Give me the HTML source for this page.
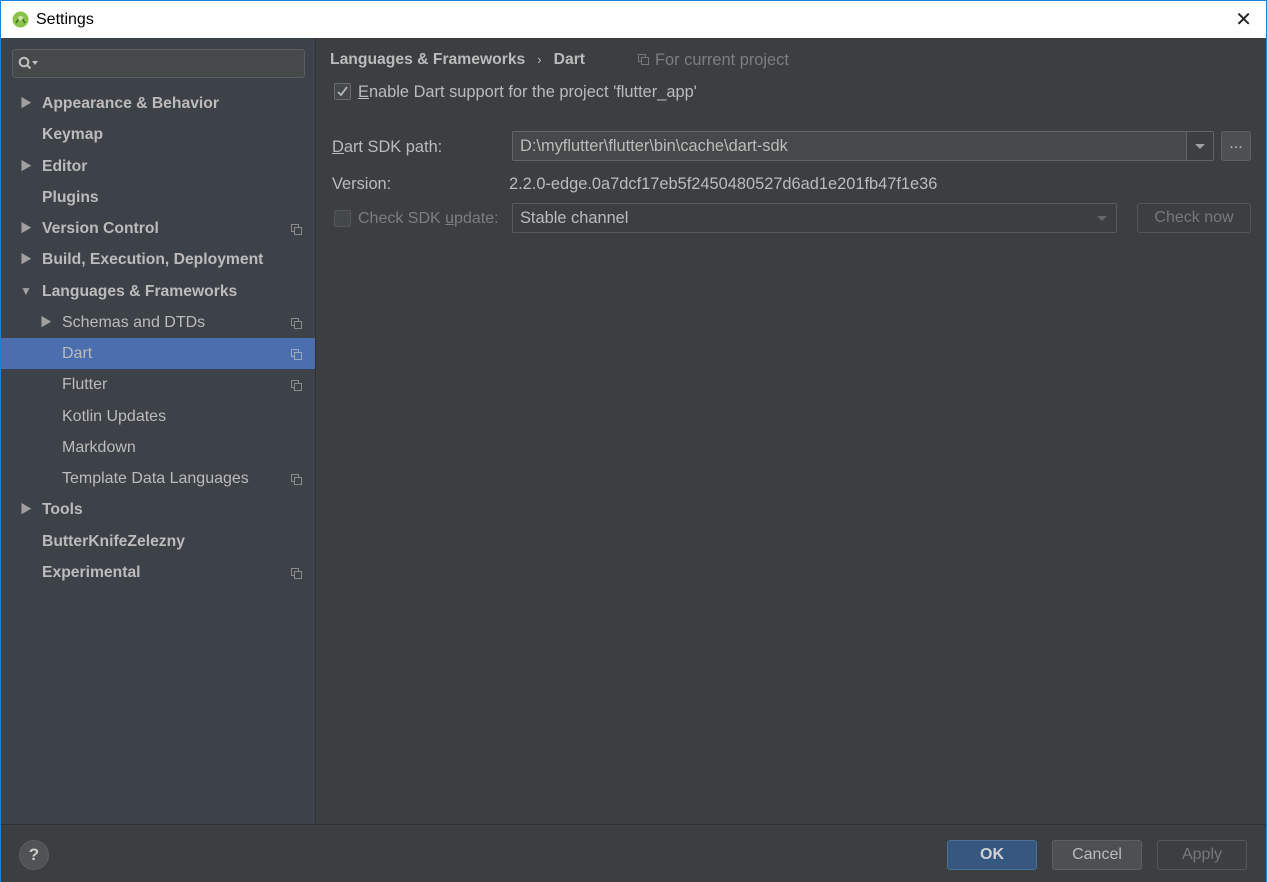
<!DOCTYPE html>
<html><head><meta charset="utf-8"><style>
*{box-sizing:border-box;margin:0;padding:0}
body{width:1267px;height:882px;overflow:hidden;font-family:"Liberation Sans","Noto Sans CJK SC",sans-serif;font-size:16px;color:#bbbbbb;background:#3c3f41;position:relative}
.win{position:absolute;inset:0;border:1px solid #1883d7}
.title{position:absolute;left:0;top:0;width:1265px;height:37px;background:#fff;color:#000;font-size:16px}
.title .t{position:absolute;left:35px;top:10px}
.title .x{position:absolute;right:14px;top:6px;font-size:20px;color:#222}
.side{position:absolute;left:0;top:37px;width:315px;height:786px;background:#3d4148;border-right:1px solid #2f3133}
.search{position:absolute;left:11px;top:11px;width:293px;height:29px;border:1px solid #5a5d60;border-radius:3px;background:#45494a}
.item{position:absolute;left:0;width:314px;height:31px;line-height:31px}
.item b{font-weight:bold;font-size:15.7px}
.item .a{position:absolute;left:19px;top:0;font-size:12px;color:#a0a0a0}
.sel{background:#4b6eaf}
.ic{position:absolute;left:290px;top:11px;width:11px;height:11px}
.main{position:absolute;left:316px;top:37px;width:949px;height:786px;background:#3c3f41;font-size:16.4px}
.main>div{line-height:20px}
.foot{position:absolute;left:0;top:823px;width:1265px;height:58px;background:#3c3f41;border-top:1px solid #2d2f30}
.btn{position:absolute;height:30px;border:1px solid #5e6060;border-radius:3px;text-align:center;line-height:28px;background:#4c5052;font-size:16px}
.main>div.btn{line-height:28px}
.cb{position:absolute;width:17px;height:17px;border:1px solid #6b6b6b;border-radius:2px;background:#43494a}
.main>div.field{position:absolute;border:1px solid #646464;border-radius:2px;background:#45494a;height:30px;line-height:28px;padding-left:7px}
</style></head><body><div class="win">
<div class="title"><svg style="position:absolute;left:11px;top:10px" width="17" height="17" viewBox="0 0 17 17"><circle cx="8.5" cy="8.5" r="8" fill="#8bc34a"/><path d="M4 12 L8.5 5 L13 12" stroke="#3d6f1e" stroke-width="1.6" fill="none"/><circle cx="8.5" cy="7" r="2.5" fill="#cde4a8"/></svg><span class="t">Settings</span><span class="x">✕</span></div>
<div class="side">
<div class="search"><svg style="position:absolute;left:5px;top:6px" width="22" height="16"><circle cx="6" cy="6" r="4.3" stroke="#c0c0c0" stroke-width="2" fill="none"/><line x1="9" y1="9" x2="12.5" y2="12.5" stroke="#c0c0c0" stroke-width="2"/><path d="M14 5 L20 5 L17 9Z" fill="#c0c0c0"/></svg></div>
<div class="item" style="top:50px"><span class="a">▶</span><b style="margin-left:41px">Appearance &amp; Behavior</b></div>
<div class="item" style="top:81px"><b style="margin-left:41px">Keymap</b></div>
<div class="item" style="top:113px"><span class="a">▶</span><b style="margin-left:41px">Editor</b></div>
<div class="item" style="top:144px"><b style="margin-left:41px">Plugins</b></div>
<div class="item" style="top:175px"><span class="a">▶</span><b style="margin-left:41px">Version Control</b><svg class="ic"><rect x="0.5" y="0.5" width="7" height="7" fill="none" stroke="#8a8a8a"/><rect x="3.5" y="3.5" width="7" height="7" fill="#3d4148" stroke="#8a8a8a"/></svg></div>
<div class="item" style="top:206px"><span class="a">▶</span><b style="margin-left:41px">Build, Execution, Deployment</b></div>
<div class="item" style="top:238px"><span class="a">▼</span><b style="margin-left:41px">Languages &amp; Frameworks</b></div>
<div class="item" style="top:269px"><span class="a" style="left:39px">▶</span><span style="margin-left:61px">Schemas and DTDs</span><svg class="ic"><rect x="0.5" y="0.5" width="7" height="7" fill="none" stroke="#8a8a8a"/><rect x="3.5" y="3.5" width="7" height="7" fill="#3d4148" stroke="#8a8a8a"/></svg></div>
<div class="item sel" style="top:300px"><span style="margin-left:61px">Dart</span><svg class="ic"><rect x="0.5" y="0.5" width="7" height="7" fill="none" stroke="#9aa8c4"/><rect x="3.5" y="3.5" width="7" height="7" fill="#4b6eaf" stroke="#9aa8c4"/></svg></div>
<div class="item" style="top:331px"><span style="margin-left:61px">Flutter</span><svg class="ic"><rect x="0.5" y="0.5" width="7" height="7" fill="none" stroke="#8a8a8a"/><rect x="3.5" y="3.5" width="7" height="7" fill="#3d4148" stroke="#8a8a8a"/></svg></div>
<div class="item" style="top:363px"><span style="margin-left:61px">Kotlin Updates</span></div>
<div class="item" style="top:394px"><span style="margin-left:61px">Markdown</span></div>
<div class="item" style="top:425px"><span style="margin-left:61px">Template Data Languages</span><svg class="ic"><rect x="0.5" y="0.5" width="7" height="7" fill="none" stroke="#8a8a8a"/><rect x="3.5" y="3.5" width="7" height="7" fill="#3d4148" stroke="#8a8a8a"/></svg></div>
<div class="item" style="top:456px"><span class="a">▶</span><b style="margin-left:41px">Tools</b></div>
<div class="item" style="top:488px"><b style="margin-left:41px">ButterKnifeZelezny</b></div>
<div class="item" style="top:519px"><b style="margin-left:41px">Experimental</b><svg class="ic"><rect x="0.5" y="0.5" width="7" height="7" fill="none" stroke="#8a8a8a"/><rect x="3.5" y="3.5" width="7" height="7" fill="#3d4148" stroke="#8a8a8a"/></svg></div>
</div>
<div class="main">
<div style="position:absolute;left:13px;top:12px;font-size:15.7px"><b>Languages &amp; Frameworks</b><span style="margin:0 12px;font-size:13px">›</span><b>Dart</b></div>
<svg style="position:absolute;left:321px;top:16px" width="11" height="11"><rect x="0.5" y="0.5" width="7" height="7" fill="none" stroke="#777"/><rect x="3.5" y="3.5" width="7" height="7" fill="#3c3f41" stroke="#777"/></svg>
<div style="position:absolute;left:338px;top:12px;color:#7b7e80">For current project</div>
<div class="cb" style="left:17px;top:45px"><svg width="15" height="15" style="position:absolute;left:0;top:0"><path d="M3 8 L6 11 L12 3" stroke="#b8b8b8" stroke-width="1.8" fill="none"/></svg></div>
<div style="position:absolute;left:41px;top:44px"><u>E</u>nable Dart support for the project 'flutter_app'</div>
<div style="position:absolute;left:15px;top:99px"><u>D</u>art SDK path:</div>
<div class="field" style="left:195px;top:93px;width:702px">D:\myflutter\flutter\bin\cache\dart-sdk<div style="position:absolute;right:0;top:0;width:27px;height:28px;border-left:1px solid #646464;background:#3c3f41"><svg width="27" height="28"><path d="M8 12 L18 12 L13 17Z" fill="#a0a0a0"/></svg></div></div>
<div class="btn" style="left:904px;top:93px;width:30px;line-height:24px">...</div>
<div style="position:absolute;left:15px;top:136px">Version:</div>
<div style="position:absolute;left:192px;top:136px">2.2.0-edge.0a7dcf17eb5f2450480527d6ad1e201fb47f1e36</div>
<div class="cb" style="left:17px;top:172px;border-color:#555"></div>
<div style="position:absolute;left:41px;top:171px;color:#7b7e80;font-size:16px">Check SDK <u>u</u>pdate:</div>
<div class="field" style="left:195px;top:165px;width:605px;background:#3c3f41;border-color:#5a5a5a">Stable channel<svg style="position:absolute;right:4px;top:0" width="20" height="28"><path d="M5 12 L15 12 L10 17Z" fill="#666"/></svg></div>
<div class="btn" style="left:820px;top:165px;width:114px;background:#3c3f41;border-color:#555;color:#777">Check now</div>
</div>
<div class="foot">
<div style="position:absolute;left:18px;top:15px;width:30px;height:30px;border-radius:50%;background:#4f5354;border:1px solid #5a5e60;text-align:center;line-height:28px;font-weight:bold;font-size:17px;color:#ccc">?</div>
<div class="btn" style="left:946px;top:15px;width:90px;background:#365880;border-color:#4a6f99;font-weight:bold;color:#d0d0d0">OK</div>
<div class="btn" style="left:1051px;top:15px;width:90px">Cancel</div>
<div class="btn" style="left:1156px;top:15px;width:90px;background:#3c3f41;border-color:#555;color:#777">Apply</div>
</div>
</div></body></html>
